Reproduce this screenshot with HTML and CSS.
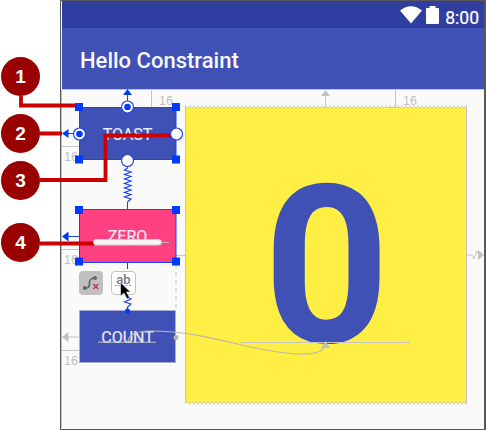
FILE: index.html
```html
<!DOCTYPE html>
<html lang="en">
<head>
<meta charset="utf-8">
<title>Hello Constraint</title>
<link rel="stylesheet" href="styles.css">
</head>
<body>
<div class="page">
  <aside class="callouts">
    <span class="callout">1</span>
    <span class="callout">2</span>
    <span class="callout">3</span>
    <span class="callout">4</span>
  </aside>
  <main class="device">
    <div class="status">
      <svg width="22" height="18" viewBox="0 0 22 18"><path d="M0 4.500Q11-4 22 4.500L11 17.500Z" fill="#fff"/></svg>
      <svg width="13" height="18" viewBox="0 0 13 18"><path d="M1 2H3.5V0H9.500V2H12Q13 2 13 3V17Q13 18 12 18H1Q0 18 0 17V3Q0 2 1 2Z" fill="#fff"/></svg>
      <span class="clock">8:00</span>
    </div>
    <header class="appbar">Hello Constraint</header>
    <div class="canvas">
      <div class="buttons">
        <div class="button">TOAST</div>
        <div class="button zero">ZERO</div>
        <div class="tools">
          <span class="tool clear"><svg width="24" height="24" viewBox="0 0 24 24"><path d="M5.500 17H7.500C11.500 17 10 13 10.500 11Q11 7 16 7" fill="none" stroke="#666" stroke-width="1.700"/><circle cx="5.800" cy="17" r="2" fill="#666"/><circle cx="16" cy="7" r="2" fill="#666"/><path d="M14.300 13L19.300 18M19.300 13L14.300 18" stroke="#c23a60" stroke-width="1.600"/></svg></span>
          <span class="tool baseline">ab</span>
        </div>
        <div class="button count">COUNT</div>
      </div>
      <div class="counter">0</div>
    </div>
  </main>
  <svg class="overlay" width="486" height="430" viewBox="0 0 486 430">
    <g fill="none" stroke="#c4c4c4">
      <path d="M151.500 90V107M395.500 90V107M325.500 95V108M389 107.500H401M146 107.500H158M62 146.500H80M62 249.500H80M62 350.500H79M67 337H79M176 255.500H186M467 255H472L474 259L477 251L479 255"/>
      <path d="M176 264V310" stroke-dasharray="4 4"/>
      <path d="M185.500 105V403.500M466.500 107V403.500"/>
      <path d="M187 107.500H467M187 402.500H467" stroke-dasharray="2 2"/>
      <path d="M189 106H467M189 404H467" stroke-dasharray="2 2"/>
      <path d="M98 342.200H156M241 342.500H410"/>
      <path d="M128 341Q130 331 150 331C190 331 220 340 250 347C285 354 320 359 325 346" stroke="#bdbba5" stroke-width="1.200"/>
    </g>
    <path fill="#c1c1c1" d="M325.500 90L330 96H321ZM62 337L68.500 332V342ZM325.500 341L330 348H321ZM478 250L484 255L478 260Z"/>
    <circle cx="176" cy="337.500" r="2.500" fill="#b4b4b4"/>
    <g class="margins"><text x="159" y="104.500">16</text><text x="403" y="104.500">16</text><text x="64" y="161">16</text><text x="64" y="264">16</text><text x="64" y="365">16</text></g>
    <g fill="none" stroke="#1f42f0">
      <path d="M127.500 94V107M67 133.500H79M67 236.500H79M127.500 202V210M127.500 262V269"/>
      <path d="M127.500 166V168L124.500 170L131 172L124.500 174.500L131 176.500L124.500 179L131 181L124.500 183.500L131 185.500L124.500 188L131 190L124.500 192.500L131 194.500L124.500 197L131 199L127.500 202M127.500 297L131 299L124.500 302L131 304L127.500 307V310" stroke-width="1.200"/>
      <path d="M79.500 107.500H176V159.500H79.500ZM79.500 209.500H176V262.500H79.500Z"/>
    </g>
    <path fill="#0039ff" d="M127.500 89L132 95H123ZM62 133.500L68.500 129V138ZM62 236.500L68.500 231.500V241.500ZM75 103H83V111H75ZM172 103H180V111H172ZM75 155.500H83V163.500H75ZM172 155.500H180V163.500H172ZM75 206H83V214H75ZM172 206H180V214H172ZM75 257.500H83V265.500H75ZM172 257.500H180V265.500H172Z"/>
    <circle cx="127.500" cy="311" r="2.500" fill="#0039ff"/>
    <path d="M21 96V105.500H76M40 133.500H62M40 180H105.500V135.500H171M40 243.500H94" fill="none" stroke="#cb0000" stroke-width="3.800"/>
    <g fill="#fff" stroke="#2742e8" stroke-width="1.200"><circle cx="127.500" cy="107" r="6"/><circle cx="79.500" cy="134" r="6"/><circle cx="127.500" cy="160.500" r="6"/><circle cx="176.500" cy="134" r="6"/></g>
    <g fill="#0039ff"><circle cx="127.500" cy="107" r="3.300"/><circle cx="79.500" cy="134" r="3.300"/></g>
    <path d="M160 242.500H169" stroke="#c4adbd"/>
    <rect x="93.500" y="239.500" width="68" height="5.500" rx="2.750" fill="#f5f5f5" stroke="#d9cfd3"/>
    <path d="M115 285.500H131" stroke="#35b8e0" stroke-dasharray="2 1.500"/>
    <path d="M120.500 282.500V296L124 293L127 299L129.500 297.500L126.500 292H130.500Z" fill="#000" stroke="#f2f2f2" stroke-width=".6"/>
  </svg>
</div>
</body>
</html>
```
FILE: styles.css
```css
* { box-sizing: border-box; }
body { margin: 0; background: #fff; font-family: Roboto, sans-serif; }
.page { position: relative; display: grid; grid-template-columns: 60px 426px; width: 486px; height: 430px; overflow: hidden; }
.callouts { padding: 57px 0 0 1px; }
.callout { display: flex; align-items: center; justify-content: center; width: 39px; height: 39px; border-radius: 50%; background: #990000; color: #fff; font: bold 19px "Liberation Sans", sans-serif; }
.callout:nth-child(2) { margin-top: 18px; }
.callout:nth-child(3) { margin-top: 8px; }
.callout:nth-child(4) { margin-top: 23px; }
.device { border: 1px solid #58585a; border-right-width: 2px; background: #fafafa; }
.status { display: flex; align-items: flex-start; justify-content: flex-end; height: 27px; margin-left: 1px; padding: 5px 5px 0 0; gap: 4px; background: #303f9f; color: #fff; }
.clock { font-size: 17.5px; font-weight: 400; line-height: 24px; margin-left: 2px; -webkit-text-stroke: .2px #fff; }
.appbar { height: 62px; margin-left: 1px; padding-left: 18px; border-bottom: 1px solid #c4c4c4; background: #3f51b5; color: #f8f8fc; font-size: 22px; font-weight: 500; line-height: 66px; }
.canvas { display: flex; height: 338px; gap: 10px; padding: 17px 0 0 18px; box-shadow: inset 1px 0 #c4c4c4; }
.buttons { width: 97px; }
.button { display: flex; align-items: center; justify-content: center; height: 53px; padding-top: 2px; background: #3f51b5; color: #e9ebf6; font-size: 16px; font-weight: 400; -webkit-text-stroke: .2px #e9ebf6; }
.zero { margin-top: 50px; padding-top: 0; background: #ff4081; }
.tools { display: flex; gap: 8px; margin-top: 8px; }
.tool { width: 24px; height: 24px; border-radius: 4px; }
.clear { background: #c0c0c0; }
.baseline { width: 25px; border: 1px solid #c2c2c2; background: #fff; color: #777; font-size: 13px; font-weight: 500; line-height: 16px; text-align: center; }
.count { margin-top: 15px; padding-top: 1px; border: 1px solid #a7aed5; }
.counter { width: 281px; height: 296px; background: #ffee44; color: #3f51b5; font-size: 220px; font-weight: 700; line-height: 320px; text-align: center; }
.overlay { position: absolute; top: 0; left: 0; pointer-events: none; }
.margins { fill: #c1c1c1; font: 12.5px "Liberation Sans", sans-serif; }
```
